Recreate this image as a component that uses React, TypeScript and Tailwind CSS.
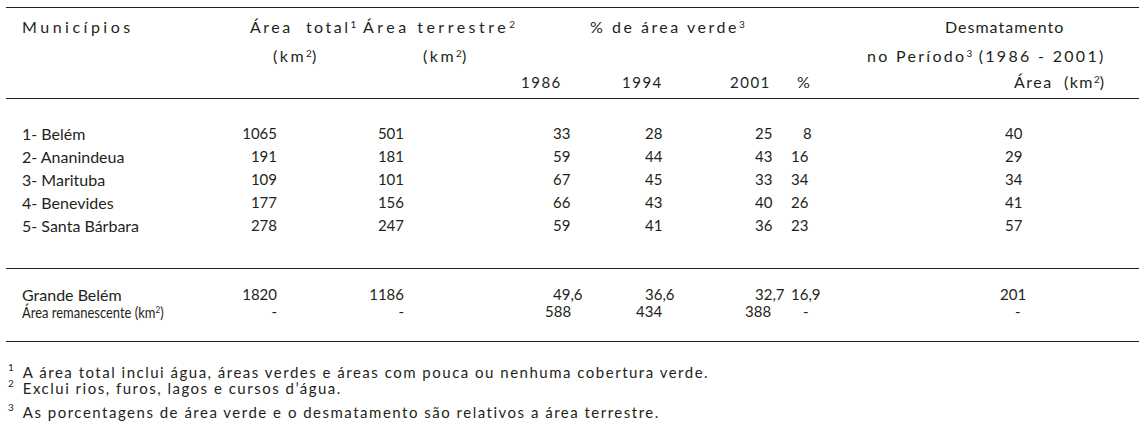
import React from "react";

type Cell = { t: React.ReactNode; c: string };

const font = { fontFamily: "Lato, 'Open Sans', sans-serif" };

const Sup = ({ children }: { children: React.ReactNode }) => (
  <sup className="text-[10px] tracking-normal">{children}</sup>
);

const rows: Cell[][] = [
  [
    { t: "1- Belém", c: "" },
    { t: "1065", c: "" },
    { t: "501", c: "" },
    { t: "33", c: "pl-[149px]" },
    { t: "28", c: "pl-[45px]" },
    { t: "25", c: "pl-[55px]" },
    { t: "8", c: "pl-[23px]" },
    { t: "40", c: "pl-[105px]" },
  ],
  [
    { t: "2- Ananindeua", c: "" },
    { t: "191", c: "" },
    { t: "181", c: "" },
    { t: "59", c: "pl-[149px]" },
    { t: "44", c: "pl-[45px]" },
    { t: "43", c: "pl-[55px]" },
    { t: "16", c: "pl-[11px]" },
    { t: "29", c: "pl-[105px]" },
  ],
  [
    { t: "3- Marituba", c: "" },
    { t: "109", c: "" },
    { t: "101", c: "" },
    { t: "67", c: "pl-[149px]" },
    { t: "45", c: "pl-[45px]" },
    { t: "33", c: "pl-[55px]" },
    { t: "34", c: "pl-[11px]" },
    { t: "34", c: "pl-[105px]" },
  ],
  [
    { t: "4- Benevides", c: "" },
    { t: "177", c: "" },
    { t: "156", c: "" },
    { t: "66", c: "pl-[149px]" },
    { t: "43", c: "pl-[45px]" },
    { t: "40", c: "pl-[55px]" },
    { t: "26", c: "pl-[11px]" },
    { t: "41", c: "pl-[105px]" },
  ],
  [
    { t: "5- Santa Bárbara", c: "" },
    { t: "278", c: "" },
    { t: "247", c: "" },
    { t: "59", c: "pl-[149px]" },
    { t: "41", c: "pl-[45px]" },
    { t: "36", c: "pl-[55px]" },
    { t: "23", c: "pl-[11px]" },
    { t: "57", c: "pl-[105px]" },
  ],
];

const totals: Cell[][] = [
  [
    { t: "Grande Belém", c: "" },
    { t: "1820", c: "" },
    { t: "1186", c: "" },
    { t: "49,6", c: "pl-[149px]" },
    { t: "36,6", c: "pl-[45px]" },
    { t: "32,7", c: "pl-[55px]" },
    { t: "16,9", c: "pl-[11px]" },
    { t: "201", c: "pl-[100px]" },
  ],
  [
    {
      t: (
        <span className="inline-block origin-left scale-x-[0.81] text-[16px]">
          Área remanescente (km<sup className="text-[10px]">2</sup>)
        </span>
      ),
      c: "",
    },
    { t: "-", c: "" },
    { t: "-", c: "" },
    { t: "588", c: "pl-[141px]" },
    { t: "434", c: "pl-[36px]" },
    { t: "388", c: "pl-[45px]" },
    { t: "-", c: "pl-[23px]" },
    { t: "-", c: "pl-[115px]" },
  ],
];

function Row({ cells, h }: { cells: Cell[]; h: string }) {
  return (
    <div className={`flex items-center ${h}`}>
      <div className={`w-[194px] pl-4 whitespace-nowrap text-[16px] ${cells[0].c}`}>{cells[0].t}</div>
      <div className={`w-[77px] text-right ${cells[1].c}`}>{cells[1].t}</div>
      <div className={`w-[127px] text-right ${cells[2].c}`}>{cells[2].t}</div>
      <div className={`w-[196px] ${cells[3].c}`}>{cells[3].t}</div>
      <div className={`w-[100px] ${cells[4].c}`}>{cells[4].t}</div>
      <div className={`w-[80px] ${cells[5].c}`}>{cells[5].t}</div>
      <div className={`w-[120px] ${cells[6].c}`}>{cells[6].t}</div>
      <div className={`flex-1 ${cells[7].c}`}>{cells[7].t}</div>
    </div>
  );
}

export default function App() {
  return (
    <div className="w-[1145px] h-[442px] bg-white text-[#231f20]" style={font}>
      <div className="pl-[6px] pr-[6px]">
        <div className="border-t border-[#231f20] mt-[7px]" />
        {/* header */}
        <div className="text-[16px] tracking-[2.5px] leading-none whitespace-nowrap">
          <div className="flex h-[38px] items-center">
            <div className="w-[244px] pl-4 tracking-[3.5px]">Municípios</div>
            <div className="w-[340px] whitespace-pre">
              Área  total<Sup>1</Sup> <span className="tracking-[3.5px]">Área terrestre</span>
              <Sup>2</Sup>
            </div>
            <div className="w-[355px]">
              % de área verde<Sup>3</Sup>
            </div>
            <div className="tracking-[1px]">Desmatamento</div>
          </div>
          <div className="flex h-[20px] items-center">
            <div className="w-[267px]" />
            <div className="w-[150px]">
              (km<Sup>2</Sup>)
            </div>
            <div className="w-[444px]">
              (km<Sup>2</Sup>)
            </div>
            <div className="tracking-[2.3px]">
              no Período<Sup>3</Sup> (1986 - 2001)
            </div>
          </div>
          <div className="flex h-[32px] items-center">
            <div className="w-[515px]" />
            <div className="w-[101px] text-[15px] tracking-[1.5px]">1986</div>
            <div className="w-[108px] text-[15px] tracking-[1.5px]">1994</div>
            <div className="w-[67px] text-[15px] tracking-[1.5px]">2001</div>
            <div className="w-[217px]">%</div>
            <div className="tracking-[1.5px] whitespace-pre">
              Área  (km<Sup>2</Sup>)
            </div>
          </div>
        </div>
        <div className="border-t border-[#231f20]" />
        {/* body */}
        <div className="text-[15px] leading-none pt-[23px]">
          {rows.map((r, i) => (
            <Row key={i} cells={r} h="h-[23px]" />
          ))}
        </div>
        <div className="border-t border-[#231f20] mt-[31px]" />
        <div className="text-[15px] leading-none pt-[17px]">
          {totals.map((r, i) => (
            <Row key={i} cells={r} h="h-[17px]" />
          ))}
        </div>
        <div className="border-t border-[#231f20] mt-[21px]" />
        <div className="text-[15px] tracking-[1.5px] leading-none pl-[2px] pt-[22px] whitespace-nowrap">
          <div className="h-[16px] flex items-center">
            <Sup>1</Sup>
            <span className="ml-[9px]">
              A área total inclui água, áreas verdes e áreas com pouca ou nenhuma cobertura verde.
            </span>
          </div>
          <div className="h-[16px] flex items-center">
            <Sup>2</Sup>
            <span className="ml-[9px]">Exclui rios, furos, lagos e cursos d’água.</span>
          </div>
          <div className="h-[16px] mt-[8px] flex items-center">
            <Sup>3</Sup>
            <span className="ml-[9px]">
              As porcentagens de área verde e o desmatamento são relativos a área terrestre.
            </span>
          </div>
        </div>
      </div>
    </div>
  );
}
